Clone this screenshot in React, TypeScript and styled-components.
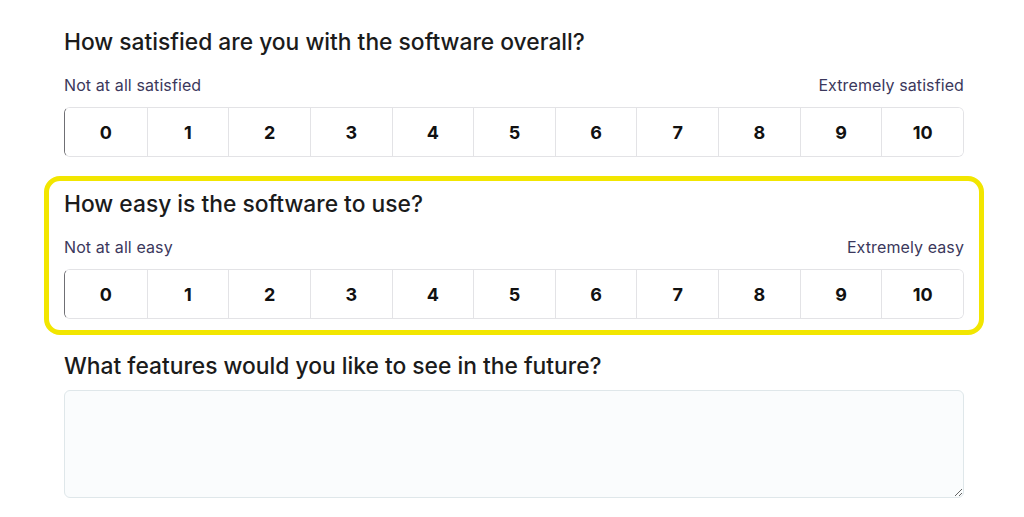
import styled, { createGlobalStyle } from "styled-components";

const GlobalStyle = createGlobalStyle`
  body {
    margin: 0;
    background: #ffffff;
    font-family: "Inter", "Noto Sans", sans-serif;
    color: #1a1a1a;
  }
`;

type Scale = {
  question: string;
  low: string;
  high: string;
  highlighted?: boolean;
};

const scales: Scale[] = [
  {
    question: "How satisfied are you with the software overall?",
    low: "Not at all satisfied",
    high: "Extremely satisfied",
  },
  {
    question: "How easy is the software to use?",
    low: "Not at all easy",
    high: "Extremely easy",
    highlighted: true,
  },
];

const values = Array.from({ length: 11 }, (_, i) => i);

const App = () => {
  return (
    <Page>
      <GlobalStyle />
      {scales.map((s) => (
        <Block key={s.question} $highlighted={s.highlighted}>
          <Question>{s.question}</Question>
          <Labels>
            <span>{s.low}</span>
            <span>{s.high}</span>
          </Labels>
          <Row>
            {values.map((v) => (
              <Cell key={v} type="button">
                {v}
              </Cell>
            ))}
          </Row>
        </Block>
      ))}
      <Block>
        <Question>What features would you like to see in the future?</Question>
        <TextArea />
      </Block>
    </Page>
  );
};

export default App;

const Page = styled.main`
  width: 940px;
  padding: 14px 0 0 44px;
  display: flex;
  flex-direction: column;
  gap: 3px;
`;

const Block = styled.section<{ $highlighted?: boolean }>`
  border: 5px solid ${({ $highlighted }) => ($highlighted ? "#f2e600" : "transparent")};
  border-radius: 16px;
  padding: 8px 15px 11px 15px;
  display: flex;
  flex-direction: column;
`;

const Question = styled.h2`
  margin: 0;
  font-size: 22.8px;
  font-weight: 500;
  line-height: 30px;
  color: #1b1b1b;
`;

const Labels = styled.div`
  display: flex;
  justify-content: space-between;
  margin-top: 18px;
  font-size: 16px;
  letter-spacing: 0.1px;
  line-height: 20px;
  color: #3b385c;
`;

const Row = styled.div`
  margin-top: 12px;
  display: grid;
  grid-template-columns: repeat(11, 1fr);
  border: 1px solid #e3e3e6;
  border-left: 1px solid #6f6f74;
  border-radius: 6px;
  overflow: hidden;
  height: 50px;
  box-sizing: border-box;
`;

const Cell = styled.button`
  border: none;
  border-left: 1px solid #e3e3e6;
  background: #ffffff;
  font-family: "Inter", "Noto Sans", sans-serif;
  font-size: 18px;
  font-weight: 700;
  color: #111111;
  padding: 0;

  &:first-child {
    border-left: none;
  }
`;

const TextArea = styled.textarea`
  margin-top: 9px;
  height: 108px;
  box-sizing: border-box;
  border: 1px solid #dfe7ea;
  border-radius: 6px;
  background: #fafcfd;
  resize: vertical;
`;
